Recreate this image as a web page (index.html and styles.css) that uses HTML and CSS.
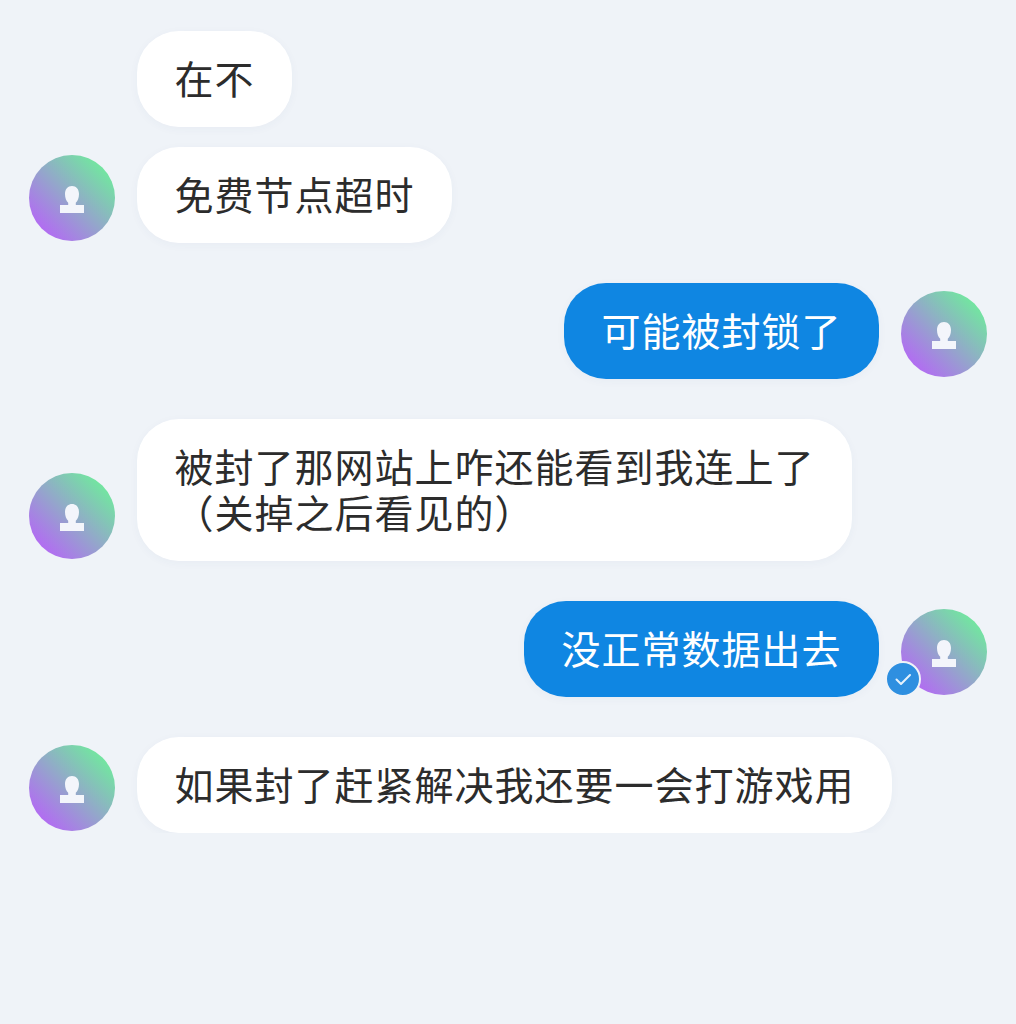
FILE: index.html
```html
<!DOCTYPE html>
<html>
<head>
    <title>聊天记录</title>
    <meta name="viewport" content="width=device-width, initial-scale=1.0">
    <link rel="stylesheet" href="styles.css">
</head>
<body>
    <svg class="defs" width="0" height="0" aria-hidden="true">
        <symbol id="person" viewBox="0 0 24 27">
            <path d="M12 0C7.800 0 5 3.200 5 8c0 3.800 1.300 7 3.200 8.800V19H0v8h24v-8h-8.200v-2.200C17.700 15 19 11.800 19 8c0-4.800-2.800-8-7-8z"/>
        </symbol>
    </svg>

    <div class="chat">
        <div class="group">
            <div class="row">
                <div class="avatar-space"></div>
                <div class="bubble">在不</div>
            </div>
            <div class="row">
                <div class="avatar"><svg class="person"><use href="#person"/></svg></div>
                <div class="bubble">免费节点超时</div>
            </div>
        </div>

        <div class="row mine">
            <div class="bubble">可能被封锁了</div>
            <div class="avatar"><svg class="person"><use href="#person"/></svg></div>
        </div>

        <div class="row">
            <div class="avatar"><svg class="person"><use href="#person"/></svg></div>
            <div class="bubble">被封了那网站上咋还能看到我连上了<br>（关掉之后看见的）</div>
        </div>

        <div class="row mine">
            <div class="bubble">没正常数据出去</div>
            <div class="avatar">
                <svg class="person"><use href="#person"/></svg>
                <span class="badge">
                    <svg viewBox="0 0 32 32" width="32" height="32"><path d="M9.500 16.500l4.500 4.500 9-9" fill="none" stroke="#e6f2fc" stroke-width="2" stroke-linecap="round" stroke-linejoin="round"/></svg>
                </span>
            </div>
        </div>

        <div class="row">
            <div class="avatar"><svg class="person"><use href="#person"/></svg></div>
            <div class="bubble">如果封了赶紧解决我还要一会打游戏用</div>
        </div>
    </div>
</body>
</html>
```

FILE: styles.css
```css
body {
    margin: 0;
    background: #eff3f8;
    font-family: "Noto Sans CJK SC", "Noto Sans", sans-serif;
    color: #2c2c2c;
}

.defs { position: absolute; }

.chat {
    display: flex;
    flex-direction: column;
    gap: 40px;
    padding: 31px 29px 0;
}

.group {
    display: flex;
    flex-direction: column;
    gap: 20px;
}

.row {
    display: flex;
    align-items: flex-end;
    gap: 22px;
}

.row.mine { justify-content: flex-end; }

.bubble {
    padding: 23px 37.500px 27px;
    border-radius: 42px;
    background: #fff;
    font-size: 39px;
    letter-spacing: 1px;
    line-height: 46px;
    box-shadow: 0 2px 10px rgba(60, 80, 120, 0.04);
    white-space: nowrap;
}

.mine .bubble {
    background: #0f86e2;
    color: #fff;
}

.avatar, .avatar-space {
    flex: none;
    width: 86px;
    height: 86px;
}

.avatar {
    position: relative;
    display: flex;
    align-items: center;
    justify-content: center;
    margin-bottom: 2px;
    border-radius: 50%;
    background: linear-gradient(45deg, #b26cf2 14%, #72e6a0 86%);
}

.person {
    width: 24px;
    height: 27px;
    margin-top: 3px;
    fill: #f3f5fb;
}

.badge {
    position: absolute;
    left: -16px;
    bottom: -2px;
    width: 32px;
    height: 32px;
    border: 2px solid #eff3f8;
    border-radius: 50%;
    background: #2e8fe0;
}

.badge svg { display: block; }
```
